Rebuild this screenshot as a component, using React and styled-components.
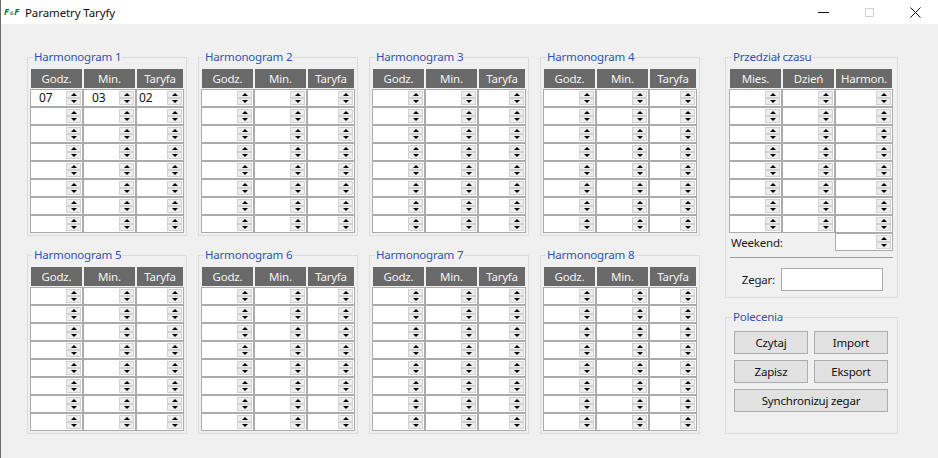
import React from "react";
import styled, { createGlobalStyle } from "styled-components";

const GlobalStyle = createGlobalStyle`
  html, body {
    margin: 0;
    padding: 0;
    background: #f0f0f0;
  }
  body {
    font-family: "Noto Sans", "Open Sans", sans-serif;
    font-size: 11.5px;
    letter-spacing: -0.2px;
    color: #1a1a1a;
  }
`;

const schedules = [1, 2, 3, 4, 5, 6, 7, 8];
const rowIds = [0, 1, 2, 3, 4, 5, 6, 7];

const App = () => {
  const renderTable = (columns, headers, firstRow = []) => (
    <Table>
      <HeaderRow $columns={columns}>
        {headers.map((label) => (
          <HeaderCell key={label}>{label}</HeaderCell>
        ))}
      </HeaderRow>
      {rowIds.map((row) => (
        <Row key={row} $columns={columns}>
          {headers.map((label, i) => (
            <Spin key={label} value={row === 0 ? firstRow[i] : ""} $inset={i === 2 ? 2 : 8} />
          ))}
        </Row>
      ))}
    </Table>
  );

  return (
    <Window>
      <GlobalStyle />
      <TitleBar>
        <Logo>
          F<LogoAmp>&amp;</LogoAmp>F
        </Logo>
        <Title>Parametry Taryfy</Title>
        <WindowButtons>
          <WindowButton>
            <svg width="11" height="11" viewBox="0 0 11 11">
              <path d="M0 5.5h11" stroke="#111" fill="none" />
            </svg>
          </WindowButton>
          <WindowButton>
            <svg width="11" height="11" viewBox="0 0 11 11">
              <path d="M1.5 1.5h8v8h-8z" stroke="#cfcfcf" fill="none" />
            </svg>
          </WindowButton>
          <WindowButton>
            <svg width="11" height="11" viewBox="0 0 11 11">
              <path d="M0.5 0.5l10 10M10.5 0.5l-10 10" stroke="#111" fill="none" />
            </svg>
          </WindowButton>
        </WindowButtons>
      </TitleBar>
      <Content>
        <Schedules>
          {schedules.map((n) => (
            <Group key={n}>
              <GroupTitle>Harmonogram {n}</GroupTitle>
              {renderTable("53px 53px 48px", ["Godz.", "Min.", "Taryfa"], n === 1 ? ["07", "03", "02"] : [])}
            </Group>
          ))}
        </Schedules>
        <SideColumn>
          <Group>
            <GroupTitle>Przedział czasu</GroupTitle>
            {renderTable("53px 53px 58px", ["Mies.", "Dzień", "Harmon."])}
            <WeekendRow>
              <span>Weekend:</span>
              <WeekendField>
                <Spin value="" $inset={2} />
              </WeekendField>
            </WeekendRow>
            <Divider />
            <ClockRow>
              <label>Zegar:</label>
              <ClockInput />
            </ClockRow>
          </Group>
          <Group>
            <GroupTitle>Polecenia</GroupTitle>
            <Commands>
              <CommandButton>Czytaj</CommandButton>
              <CommandButton>Import</CommandButton>
              <CommandButton>Zapisz</CommandButton>
              <CommandButton>Eksport</CommandButton>
              <WideButton>Synchronizuj zegar</WideButton>
            </Commands>
          </Group>
        </SideColumn>
      </Content>
    </Window>
  );
};

const Spin = ({ value, $inset }) => (
  <Cell>
    <CellValue $inset={$inset}>{value}</CellValue>
    <Spinner>
      <SpinButton>
        <ArrowUp />
      </SpinButton>
      <SpinButton>
        <ArrowDown />
      </SpinButton>
    </Spinner>
  </Cell>
);

const Window = styled.div`
  width: 938px;
  height: 458px;
  box-sizing: border-box;
  border-left: 1px solid #6a6a6a;
  overflow: hidden;
  display: flex;
  flex-direction: column;
  background: #f0f0f0;
`;

const TitleBar = styled.div`
  height: 24px;
  flex: none;
  display: flex;
  align-items: center;
  background: #fff;
  padding-left: 3px;
`;

const Logo = styled.span`
  width: 21px;
  font-size: 9px;
  line-height: 12px;
  font-weight: 700;
  font-style: italic;
  color: #1a7029;
  letter-spacing: 0.6px;
`;

const LogoAmp = styled.span`
  font-size: 6px;
  color: #6fa878;
`;

const Title = styled.span`
  flex: 1;
  color: #111;
  letter-spacing: -0.1px;
`;

const WindowButtons = styled.div`
  display: flex;
`;

const WindowButton = styled.div`
  width: 46px;
  height: 24px;
  display: flex;
  align-items: center;
  justify-content: center;
  svg {
    display: block;
  }
`;

const Content = styled.div`
  display: flex;
  align-items: flex-start;
  padding: 25px 0 0 26px;
  gap: 25px;
`;

const Schedules = styled.div`
  display: grid;
  grid-template-columns: repeat(4, 160px);
  gap: 11px;
`;

const SideColumn = styled.div`
  width: 173px;
  display: flex;
  flex-direction: column;
  gap: 11px;
`;

const Group = styled.fieldset`
  margin: 0;
  min-width: 0;
  padding: 4px 4px 2px 2px;
  border: 1px solid #dcdcdc;
  box-sizing: border-box;
  ${SideColumn} & {
    padding: 4px 4px 6px 3px;
  }
`;

const GroupTitle = styled.legend`
  margin-left: 3px;
  padding: 0 1px;
  line-height: 16px;
  color: #2f52b8;
`;

const Table = styled.div`
  display: flex;
  flex-direction: column;
`;

const HeaderRow = styled.div`
  display: grid;
  grid-template-columns: ${(p) => p.$columns};
  height: 20px;
  padding-bottom: 1px;
  box-sizing: border-box;
`;

const HeaderCell = styled.div`
  margin: 0 1px;
  background: #696969;
  color: #f2f2f2;
  line-height: 19px;
  text-align: center;
`;

const Row = styled.div`
  display: grid;
  grid-template-columns: ${(p) => p.$columns};
  height: 18px;
`;

const Cell = styled.div`
  display: flex;
  align-items: center;
  box-sizing: border-box;
  height: 18px;
  border: 1px solid #ababab;
  background: #fff;
  padding-right: 1px;
`;

const CellValue = styled.span`
  flex: 1;
  padding-left: ${(p) => p.$inset}px;
  font-size: 12px;
  line-height: 16px;
  color: #111;
`;

const Spinner = styled.div`
  width: 15px;
  height: 14px;
  box-sizing: border-box;
  padding: 1px;
  display: flex;
  flex-direction: column;
  gap: 2px;
  background: #d2d2d2;
`;

const SpinButton = styled.div`
  flex: 1;
  background: #ededed;
  display: flex;
  align-items: center;
  justify-content: center;
`;

const ArrowUp = styled.i`
  width: 0;
  height: 0;
  border-left: 3.5px solid transparent;
  border-right: 3.5px solid transparent;
  border-bottom: 3px solid #000;
`;

const ArrowDown = styled.i`
  width: 0;
  height: 0;
  border-left: 3.5px solid transparent;
  border-right: 3.5px solid transparent;
  border-top: 3px solid #000;
`;

const WeekendRow = styled.div`
  display: flex;
  align-items: center;
  justify-content: space-between;
  height: 18px;
  padding-left: 2px;
`;

const WeekendField = styled.div`
  width: 58px;
`;

const Divider = styled.div`
  height: 1px;
  margin: 6px 0 0 1px;
  background: #a0a0a0;
`;

const ClockRow = styled.div`
  display: flex;
  align-items: center;
  justify-content: flex-end;
  gap: 6px;
  margin: 10px 10px 0 0;
`;

const ClockInput = styled.div`
  width: 102px;
  height: 23px;
  box-sizing: border-box;
  border: 1px solid #ababab;
  background: #fff;
`;

const Commands = styled.div`
  display: grid;
  grid-template-columns: 74px 74px;
  grid-auto-rows: 23px;
  gap: 6px;
  margin: 2px 0 15px 5px;
`;

const CommandButton = styled.button`
  padding: 0;
  border: 1px solid #adadad;
  background: #e1e1e1;
  font-family: inherit;
  font-size: inherit;
  letter-spacing: inherit;
  color: #111;
`;

const WideButton = styled(CommandButton)`
  grid-column: 1 / span 2;
`;

export default App;
